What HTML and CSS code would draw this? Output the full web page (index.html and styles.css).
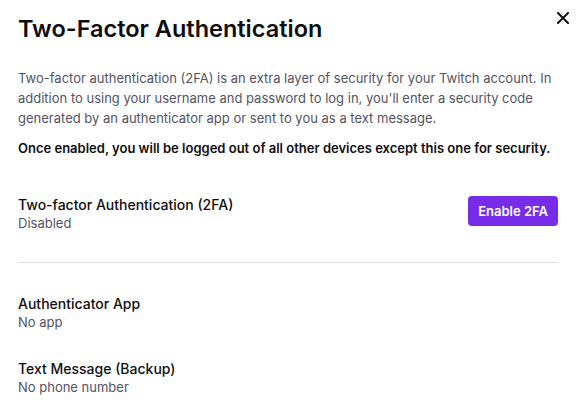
FILE: index.html
```html
<!DOCTYPE html>
<html>
<head>
<meta charset="utf-8">
<link rel="stylesheet" href="styles.css">
</head>
<body>
<div class="modal">
  <button class="close" aria-label="Close">
    <svg width="12" height="12" viewBox="0 0 12 12"><path d="M1 1L11 11M11 1L1 11" stroke="#0e0e10" stroke-width="2" stroke-linecap="square"/></svg>
  </button>
  <h1 class="title">Two-Factor Authentication</h1>
  <p class="desc">Two-factor authentication (2FA) is an extra layer of security for your Twitch account. In addition to using your username and password to log in, you'll enter a security code generated by an authenticator app or sent to you as a text message.</p>
  <p class="warn">Once enabled, you will be logged out of all other devices except this one for security.</p>
  <div class="row main">
    <div class="info">
      <div class="label">Two-factor Authentication (2FA)</div>
      <div class="sub">Disabled</div>
    </div>
    <button class="btn">Enable 2FA</button>
  </div>
  <div class="divider"></div>
  <div class="row item">
    <div class="info">
      <div class="label">Authenticator App</div>
      <div class="sub">No app</div>
    </div>
  </div>
  <div class="row item">
    <div class="info">
      <div class="label">Text Message (Backup)</div>
      <div class="sub">No phone number</div>
    </div>
  </div>
</div>
</body>
</html>
```
FILE: styles.css
```css
* { box-sizing: border-box; }
html, body { margin: 0; padding: 0; background: #fff; }
body { font-family: Inter, "Noto Sans", sans-serif; color: #0e0e10; }
.modal { position: relative; padding: 13px 24px 0 18px; width: 582px; }
.close { position: absolute; top: 12px; right: 13px; border: 0; background: none; padding: 0; width: 12px; height: 12px; display: block; }
.close svg { display: block; }
.title { margin: 0; font-size: 23.5px; font-weight: 600; line-height: 31px; letter-spacing: 0; }
.desc { margin: 24px 0 0; font-size: 13px; line-height: 20px; color: #53535f; }
.warn { margin: 10px 0 0; font-size: 13px; line-height: 20px; font-weight: 600; color: #0e0e10; }
.row { display: flex; align-items: flex-start; justify-content: space-between; }
.main { margin-top: 38px; }
.label { font-size: 14px; font-weight: 500; line-height: 18px; }
.sub { font-size: 13px; line-height: 18px; color: #53535f; }
.btn { background: #772ce8; color: #fff; border: 0; border-radius: 4px; height: 30px; padding: 0 10px; font-family: Inter, sans-serif; font-size: 13px; font-weight: 600; }
.divider { height: 1px; background: #e0e0e3; margin-top: 30px; }
.item { margin-top: 32px; }
.item + .item { margin-top: 29px; }
```
